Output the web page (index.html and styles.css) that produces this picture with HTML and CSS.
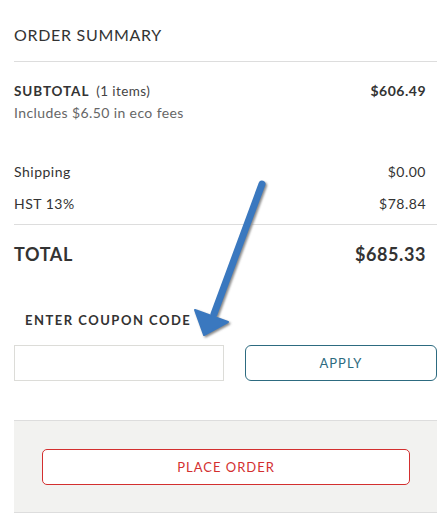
FILE: index.html
```html
<!DOCTYPE html>
<html>
<head>
<meta charset="utf-8">
<link rel="stylesheet" href="styles.css">
</head>
<body>
<div class="summary">
  <div class="header">ORDER SUMMARY</div>
  <div class="subtotal">
    <div class="row"><span><b class="label">SUBTOTAL</b>&nbsp; <span class="count">(1 items)</span></span><b class="amount">$606.49</b></div>
    <div class="eco">Includes $6.50 in eco fees</div>
  </div>
  <div class="charges">
    <div class="row small"><span>Shipping</span><span>$0.00</span></div>
    <div class="row small"><span>HST 13%</span><span>$78.84</span></div>
  </div>
  <div class="row total"><span>TOTAL</span><span>$685.33</span></div>
  <div class="coupon-label">ENTER COUPON CODE</div>
  <div class="coupon">
    <input class="coupon-input" type="text">
    <button class="apply">APPLY</button>
  </div>
  <div class="panel">
    <button class="place">PLACE ORDER</button>
  </div>
</div>
<svg class="arrow" width="448" height="521" viewBox="0 0 448 521">
  <defs>
    <filter id="sh" x="-20%" y="-20%" width="140%" height="140%">
      <feGaussianBlur stdDeviation="1"/>
    </filter>
  </defs>
  <g transform="translate(1.5,1.5)" fill="#8a8a8a" stroke="#8a8a8a" filter="url(#sh)">
    <line x1="262" y1="184" x2="214" y2="314" stroke-width="7" stroke-linecap="round"/>
    <polygon points="195,310 228,322 204,335" stroke-width="2" stroke-linejoin="round"/>
  </g>
  <g fill="#3a78bf" stroke="#3a78bf">
    <line x1="262" y1="184" x2="214" y2="314" stroke-width="7" stroke-linecap="round"/>
    <polygon points="195,310 228,322 204,335" stroke-width="2" stroke-linejoin="round"/>
  </g>
</svg>
</body>
</html>
```
FILE: styles.css
```css
html, body {
  margin: 0;
  padding: 0;
  background: #fff;
}
body {
  font-family: Lato, "Noto Sans", sans-serif;
  color: #333;
  position: relative;
}
.summary {
  margin: 0 11px 0 14px;
}
.header {
  padding: 24px 0 15px;
  line-height: 22px;
  font-size: 16px;
  letter-spacing: 0.7px;
  color: #333;
  border-bottom: 1px solid #ddd;
}
.row {
  display: flex;
  justify-content: space-between;
  align-items: baseline;
  padding-right: 11px;
}
.subtotal {
  margin-top: 18px;
}
.subtotal .row {
  line-height: 22px;
  font-size: 13.5px;
}
.label {
  font-weight: 700;
  letter-spacing: 0.9px;
}
.count {
  color: #444;
  letter-spacing: 0.4px;
}
.amount {
  font-weight: 700;
  font-size: 14px;
  letter-spacing: 0.5px;
}
.eco {
  line-height: 22px;
  font-size: 14px;
  color: #666;
  letter-spacing: 0.4px;
}
.charges {
  margin-top: 37px;
  padding-bottom: 9px;
  border-bottom: 1px solid #ddd;
  display: flex;
  flex-direction: column;
  gap: 10px;
}
.row.small {
  font-size: 14px;
  line-height: 22px;
  letter-spacing: 0.5px;
}
.total {
  margin-top: 16px;
  line-height: 26px;
  font-size: 18px;
  font-weight: 700;
  letter-spacing: 0.6px;
  color: #333;
}
.coupon-label {
  margin-top: 43px;
  padding-left: 11px;
  line-height: 20px;
  font-size: 13px;
  font-weight: 700;
  letter-spacing: 1.5px;
  color: #333;
}
.coupon {
  margin-top: 15px;
  display: flex;
  gap: 21px;
}
.coupon-input {
  box-sizing: border-box;
  width: 210px;
  height: 36px;
  margin: 0;
  border: 1px solid #dcdcd8;
  border-radius: 0;
  padding: 0 8px;
  background: #fff;
}
.apply {
  box-sizing: border-box;
  flex: 1;
  height: 36px;
  margin: 0;
  background: #fff;
  border: 1px solid #2d6b80;
  border-radius: 6px;
  color: #2d6b80;
  font-family: Lato, "Noto Sans", sans-serif;
  font-size: 13px;
  letter-spacing: 1px;
  padding: 0;
}
.panel {
  margin-top: 39px;
  background: #f2f2f0;
  border-top: 1px solid #ddd;
  border-bottom: 1px solid #ddd;
  padding: 28px 27px 27px 28px;
}
.place {
  box-sizing: border-box;
  display: block;
  width: 100%;
  height: 36px;
  margin: 0;
  background: #fff;
  border: 1px solid #d32f2f;
  border-radius: 5px;
  color: #d32f2f;
  font-family: Lato, "Noto Sans", sans-serif;
  font-size: 13px;
  letter-spacing: 1px;
}
.arrow {
  position: absolute;
  left: 0;
  top: 0;
  pointer-events: none;
}
```
